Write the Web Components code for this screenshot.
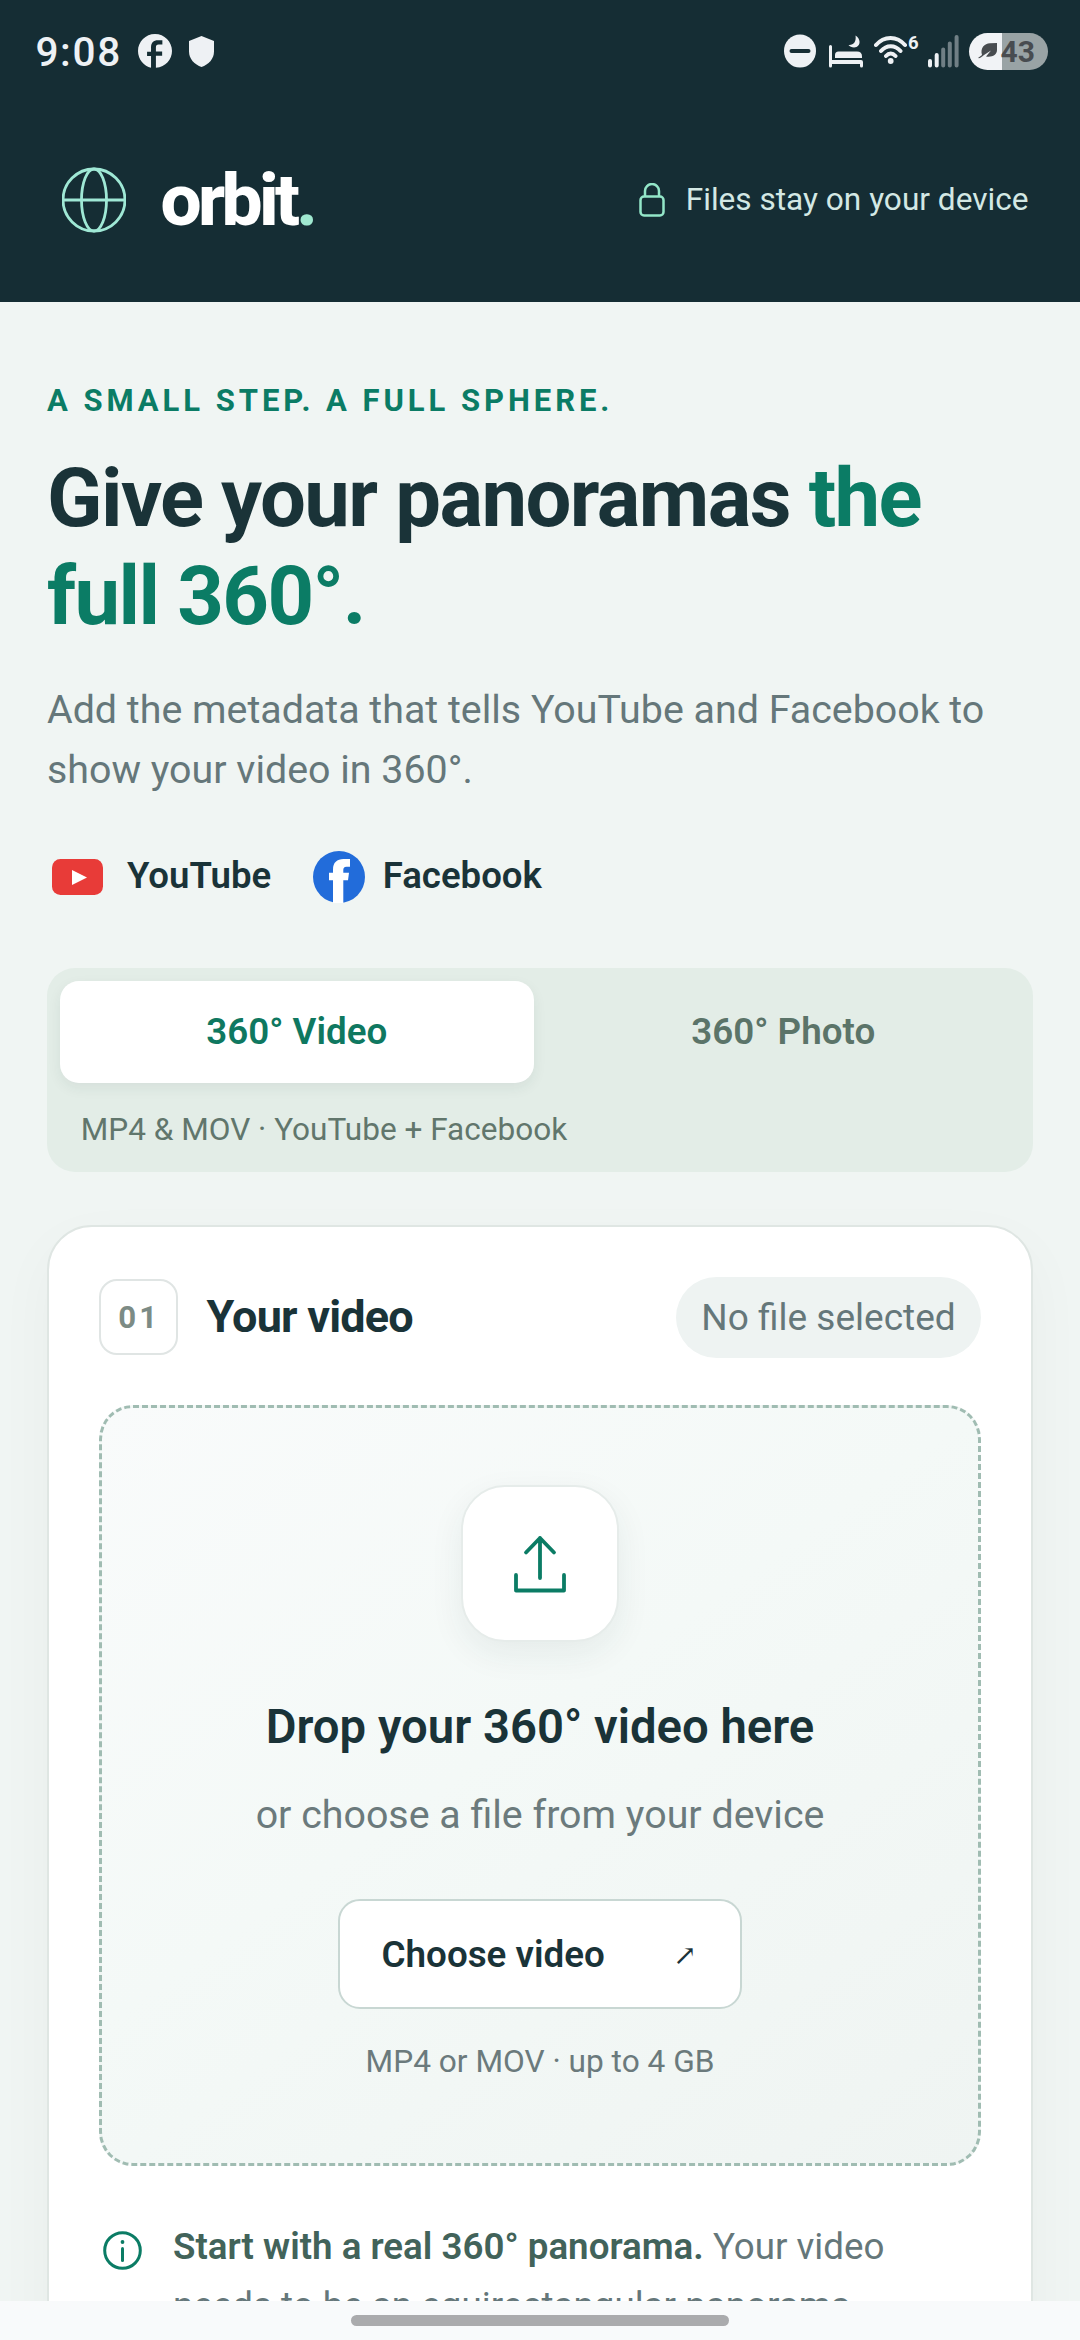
<!DOCTYPE html>
<html lang="en">
<head>
<meta charset="utf-8">
<title>orbit.</title>
<style>
  html, body { margin: 0; padding: 0; }
  body { font-family: Roboto, "Liberation Sans", sans-serif; background: #f0f5f3; color: #1a3338; }
</style>
</head>
<body>
<orbit-app></orbit-app>
<script>
const define = (name, html) => customElements.define(name, class extends HTMLElement {
  connectedCallback() {
    if (this.shadowRoot) return;
    const t = document.createElement('template');
    t.innerHTML = html;
    this.attachShadow({ mode: 'open' }).append(t.content.cloneNode(true));
  }
});

define('status-bar', `
<style>
  :host { display: flex; justify-content: space-between; box-sizing: border-box; height: 97px; padding: 31px 32px 0 35.4px; color: #eef1f4; }
  div { display: flex; height: 40px; align-items: center; }
  svg { display: block; flex: none; }
  .time { font-size: 40.500px; line-height: 42px; font-weight: 500; letter-spacing: .042em; width: 102.6px; margin-top: 2px; }
  .six { font: 700 18.500px/18px Roboto, sans-serif; margin: -17px 0 0 1.5px; width: 13px; }
  .bat { width: 79px; height: 37px; margin: 0 0 0 10px; border-radius: 19px; background: linear-gradient(90deg, #f1f3f6 33px, #99a3a5 33px); color: #484c50; font: 700 30px/37px Roboto, sans-serif; gap: 3.500px; }
</style>
<div><span class="time">9:08</span>
  <svg width="34" height="34" viewBox="0 0 24 24" fill="currentColor"><path d="M24 12.073c0-6.627-5.373-12-12-12s-12 5.373-12 12c0 5.99 4.388 10.954 9.2 11.7v-8.3H6.4v-2.9h2.8V9.43c0-3.2 1.8-5 4.8-5h3.2v2.9h-2.6c-1.491 0-1.956.925-1.956 1.874v3.2h4.4v2.9h-4.4v8.6C19.612 23.3 24 18.062 24 12.073z"/></svg>
  <svg style="margin-left:17px" width="25" height="31" viewBox="0 0 25 31" fill="currentColor"><path d="M12.5 0L25 5v10.500C25 23 19.500 28.500 12.500 31 5.500 28.500 0 23 0 15.500V5z"/></svg>
</div>
<div>
  <svg width="32" height="34" viewBox="0 0 32 34"><ellipse cx="16" cy="17" rx="16" ry="16.500" fill="currentColor"/><path d="M7.500 17h17" stroke="#162d34" stroke-width="4" stroke-linecap="round"/></svg>
  <svg style="margin-left:13px" width="34" height="34" viewBox="0 0 34 34" fill="currentColor"><path d="M0 12.500q0-1.500 1.500-1.500T3 12.500V26h29q2 0 2 2v4q0 1.500-1.500 1.500T31 32v-2H3v2q0 1.500-1.500 1.500T0 32z"/><path d="M6 24v-3q0-3.500 3.500-3.500H28q5 0 5 5V24z"/><path d="M26.500 1.500c5 3 5.500 9.500 1 11.500-3 1-6.500 0-8-2 5 .5 8-3.500 7-9.500z"/></svg>
  <svg style="margin-left:11px" width="33" height="34" viewBox="0 0 33 34" fill="none" stroke="currentColor" stroke-width="4" stroke-linecap="round"><path d="M2 11C10 1.500 23 1.500 31 11M7 17c5.500-6.500 14-6.500 19.500 0M12 22c3-3.300 6.500-3.300 9.500 0"/><circle cx="16.700" cy="27" r="2.900" fill="currentColor" stroke="none"/></svg>
  <span class="six">6</span>
  <svg style="margin-left:7px" width="31" height="34" viewBox="0 0 31 34" stroke="currentColor" stroke-width="4" stroke-linecap="round"><path d="M2 27v4.500M8.700 21v10.500"/><path opacity=".42" d="M15.200 15.500v16M21.800 9.500v22M28.600 3v28.500"/></svg>
  <div class="bat"><svg style="margin-left:9px" width="19" height="16" viewBox="0 0 19 16" fill="#484c50"><path d="M19 0v7c0 5-5 7.500-11 6.500l5-6L6 12C3.500 14.500 1.500 15.500 0 15l4-3C2 5 6.500.500 12 .300z"/></svg><span>43</span></div>
</div>`);

define('brand-bar', `
<style>
  :host { display: flex; justify-content: space-between; align-items: center; box-sizing: border-box; height: 205px; padding: 0 51.500px 0 62px; }
  div { display: flex; align-items: center; }
  svg { display: block; }
  .brand { gap: 34.500px; font-size: 73px; line-height: 90px; font-weight: 800; letter-spacing: -.05em; color: #fff; }
  .brand em { font-style: normal; color: #9fe8d0; }
  .note { gap: 21px; font-size: 31.600px; line-height: 40px; color: #d3e8e4; }
</style>
<div class="brand"><svg width="64" height="66" viewBox="0 0 64 66" fill="none" stroke="#9fe8d5" stroke-width="2.800"><circle cx="32" cy="33" r="31"/><ellipse cx="32" cy="33" rx="12.500" ry="31"/><path d="M1 33h62"/></svg><span>orbit<em>.</em></span></div>
<div class="note"><svg width="26" height="34" viewBox="0 0 26 34" fill="none" stroke="#93e6c8" stroke-width="2.500"><rect x="1.500" y="13.500" width="23" height="19" rx="3.500"/><path d="M6 13.500V8a7 7 0 0 1 14 0v5.500"/></svg><span>Files stay on your device</span></div>`);

define('hero-intro', `
<style>
  :host { display: block; padding-top: 79.400px; }
  .eye { font-size: 31px; line-height: 40px; font-weight: 700; letter-spacing: .1274em; color: #0b7c65; }
  h1 { margin: 28.700px 0 0; font-size: 81.400px; line-height: 97.500px; font-weight: 700; letter-spacing: -.0192em; color: #1a3338; }
  h1 em { font-style: normal; color: #0b7c65; }
  p { margin: 35.300px 0 0; font-size: 39.360px; line-height: 59.200px; color: #65777a; }
</style>
<div class="eye">A SMALL STEP. A FULL SPHERE.</div>
<h1>Give your panoramas <em>the<br>full 360°.</em></h1>
<p>Add the metadata that tells YouTube and Facebook to<br>show your video in 360°.</p>`);

define('platform-list', `
<style>
  :host { display: flex; align-items: center; height: 52px; margin: 52.200px 0 0 5px; font-size: 36.600px; line-height: 50px; font-weight: 600; color: #1a3338; }
  span { padding-bottom: 2px; }
  svg { display: block; flex: none; }
</style>
<svg width="51" height="36" viewBox="0 0 51 36"><rect width="51" height="36" rx="8.500" fill="#e83b38"/><path d="M20 11v15l15-7.500z" fill="#fff"/></svg>
<span style="margin-left:24px;width:186px">YouTube</span>
<svg width="52" height="52" viewBox="0 0 52 52"><circle cx="26" cy="26" r="26" fill="#226cda"/><path d="M20 52V29.200h-4v-7.400h4V18.500C20 11.500 24 8 30.500 8H37v7.700h-3.500c-2.500 0-3.200 1.300-3.200 3.300v2.800H36l-1 7.400h-4.700V52z" fill="#fff"/></svg>
<span style="margin-left:17.700px">Facebook</span>`);

define('mode-tabs', `
<style>
  :host { display: block; box-sizing: border-box; height: 204px; margin-top: 65px; padding: 13px; border-radius: 28px; background: #e3ede7; }
  .row { display: grid; grid-template-columns: 1fr 1fr; gap: 13px; }
  .tab { height: 102px; line-height: 101px; text-align: center; border-radius: 19px; font-size: 36.750px; font-weight: 600; color: #5b7469; }
  .on { background: #fff; color: #0f7860; box-shadow: 0 5px 14px rgba(26, 51, 56, .07); }
  p { margin: 27px 0 0 20.800px; font-size: 31.550px; line-height: 40px; color: #61766c; }
</style>
<div class="row"><div class="tab on">360° Video</div><div class="tab">360° Photo</div></div>
<p>MP4 &amp; MOV · YouTube + Facebook</p>`);

define('step-card', `
<style>
  :host { display: block; margin-top: 53px; padding: 50px 50px 0; height: 1200px; background: #fff; border: 2px solid #dfe6e3; border-radius: 45px; box-shadow: 0 20px 60px rgba(26, 51, 56, .035); }
  header { display: flex; align-items: center; height: 81px; margin-bottom: 47px; }
  .num { box-sizing: border-box; width: 78.500px; height: 76px; margin-right: 29px; border: 2px solid #e0e5e4; border-radius: 18px; text-align: center; font-size: 31.200px; line-height: 73px; font-weight: 700; letter-spacing: .1em; text-indent: .060em; color: #7c8b85; }
  h2 { flex: 1; margin: 0; font-size: 45px; line-height: 60px; font-weight: 700; letter-spacing: -.018em; color: #1a3338; padding-bottom: 1px; }
  .pill { width: 305px; height: 81px; border-radius: 41px; background: #eef3f2; text-align: center; font-size: 37px; line-height: 81px; color: #65777a; }
</style>
<header><div class="num">01</div><h2>Your video</h2><div class="pill">No file selected</div></header>
<slot></slot>`);

define('drop-zone', `
<style>
  :host { display: flex; flex-direction: column; align-items: center; box-sizing: border-box; height: 761.500px; padding-top: 77px; border: 3px dashed #a0bcb2; border-radius: 34px; background: linear-gradient(145deg, #f9fbfb, #f4f9f7 45%, #eff4f2); }
  .tile { box-sizing: border-box; width: 157.500px; height: 157.500px; display: grid; place-items: center; border: 2px solid #e6ecea; border-radius: 44px; background: #fff; box-shadow: 0 12px 34px rgba(26, 51, 56, .07); }
  h3 { margin: 55px 0 0; font-size: 47.280px; line-height: 60px; font-weight: 600; color: #1a3338; }
  p { margin: 28px 0 0; font-size: 39.360px; line-height: 60px; color: #6b7a7c; }
  .btn { box-sizing: border-box; display: flex; justify-content: space-between; align-items: center; width: 404px; height: 110.500px; margin-top: 53.500px; padding: 0 41px 0 41.500px; border: 2px solid #c8d7d3; border-radius: 22px; background: #fff; font-size: 36.790px; font-weight: 600; color: #1a3338; }
  .btn i { width: 28px; text-align: center; font: 400 28px/28px "DejaVu Serif", serif; padding-top: 4px; }
  small { margin-top: 32.200px; font-size: 31.650px; line-height: 40px; color: #6b7a7c; }
</style>
<div class="tile"><svg width="56" height="60" viewBox="0 0 56 60" fill="none" stroke="#0b7c65" stroke-width="3.800" stroke-linecap="round" stroke-linejoin="round"><path d="M28 44V4M14 18.500L28 4l14 14.500M4 41v15.500h48V41"/></svg></div>
<h3>Drop your 360° video here</h3>
<p>or choose a file from your device</p>
<div class="btn"><span>Choose video</span><i>↗</i></div>
<small>MP4 or MOV · up to 4 GB</small>`);

define('info-note', `
<style>
  :host { display: flex; margin-top: 50.500px; padding-left: 4px; font-size: 36.720px; line-height: 59px; color: #65777a; white-space: nowrap; }
  svg { flex: none; margin: 14px 31px 0 0; }
  b { font-weight: 600; color: #42635a; }
</style>
<svg width="39" height="39" viewBox="0 0 39 39" fill="none" stroke="#0b7c65" stroke-width="3"><circle cx="19.500" cy="19.500" r="17.800"/><path d="M19.500 17.500v12" stroke-linecap="round"/><circle cx="19.500" cy="11" r="1.900" fill="#0b7c65" stroke="none"/></svg>
<span><b>Start with a real 360° panorama.</b> Your video<br>needs to be an equirectangular panorama</span>`);

define('nav-pill', `
<style>
  :host { display: flex; justify-content: center; box-sizing: border-box; height: 39px; padding-top: 14px; background: #f8fafb; }
  div { width: 378px; height: 11px; border-radius: 6px; background: #aaabad; }
</style><div></div>`);

define('orbit-app', `
<style>
  :host { display: block; width: 1080px; height: 2340px; overflow: hidden; }
  .view { height: 2301px; overflow: hidden; background: #f0f5f3; }
  .top { background: #152d34; }
  main { padding: 0 47px; }
</style>
<div class="view">
  <div class="top"><status-bar></status-bar><brand-bar></brand-bar></div>
  <main>
    <hero-intro></hero-intro>
    <platform-list></platform-list>
    <mode-tabs></mode-tabs>
    <step-card><drop-zone></drop-zone><info-note></info-note></step-card>
  </main>
</div>
<nav-pill></nav-pill>`);
</script>
</body>
</html>
